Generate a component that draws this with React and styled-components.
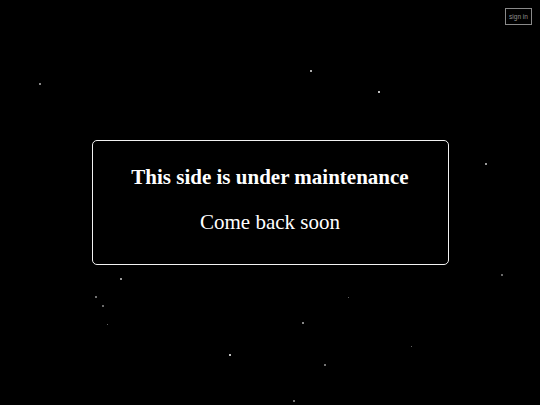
import React from 'react';
import styled, { createGlobalStyle } from 'styled-components';

const GlobalStyle = createGlobalStyle`
  html, body {
    margin: 0;
    padding: 0;
    background: #000;
  }
  body {
    font-family: "Liberation Serif", "Times New Roman", serif;
  }
`;

const stars = [
  { x: 39, y: 83, s: 2, o: 0.7 },
  { x: 310, y: 70, s: 2, o: 0.9 },
  { x: 378, y: 91, s: 2, o: 1 },
  { x: 485, y: 163, s: 2, o: 0.8 },
  { x: 120, y: 278, s: 2, o: 0.8 },
  { x: 95, y: 296, s: 2, o: 0.6 },
  { x: 102, y: 305, s: 2, o: 0.55 },
  { x: 107, y: 324, s: 1, o: 0.5 },
  { x: 229, y: 354, s: 2, o: 1 },
  { x: 302, y: 322, s: 2, o: 0.7 },
  { x: 348, y: 297, s: 1, o: 0.5 },
  { x: 324, y: 364, s: 2, o: 0.6 },
  { x: 411, y: 346, s: 1, o: 0.5 },
  { x: 293, y: 400, s: 2, o: 0.6 },
  { x: 501, y: 274, s: 2, o: 0.55 },
];

function App() {
  return (
    <Page>
      <GlobalStyle />
      {stars.map((st, i) => (
        <Star
          key={i}
          style={{ left: st.x, top: st.y, width: st.s, height: st.s, opacity: st.o }}
        />
      ))}
      <SignIn>sign in</SignIn>
      <Notice>
        <Title>This side is under maintenance</Title>
        <Subtitle>Come back soon</Subtitle>
      </Notice>
    </Page>
  );
}

const Page = styled.div`
  position: relative;
  width: 100vw;
  height: 100vh;
  background: #000;
  overflow: hidden;
  display: flex;
  align-items: center;
  justify-content: center;
`;

const Star = styled.span`
  position: absolute;
  background: #fff;
  border-radius: 50%;
`;

const SignIn = styled.button`
  position: absolute;
  top: 8px;
  right: 8px;
  width: 27px;
  height: 17px;
  padding: 0;
  background: transparent;
  border: 1px solid #8a8a8a;
  color: #909090;
  font-family: "Liberation Sans", Arial, sans-serif;
  font-size: 6.5px;
  line-height: 15px;
  cursor: pointer;
`;

const Notice = styled.div`
  box-sizing: border-box;
  width: 357px;
  height: 125px;
  border: 1.5px solid #f2f2f2;
  border-radius: 5px;
  padding-top: 23px;
  display: flex;
  flex-direction: column;
  align-items: center;
  color: #fff;
`;

const Title = styled.h1`
  margin: 0;
  font-size: 21px;
  font-weight: bold;
  line-height: 26px;
`;

const Subtitle = styled.p`
  margin: 19px 0 0;
  font-size: 21px;
  line-height: 26px;
`;

export default App;
